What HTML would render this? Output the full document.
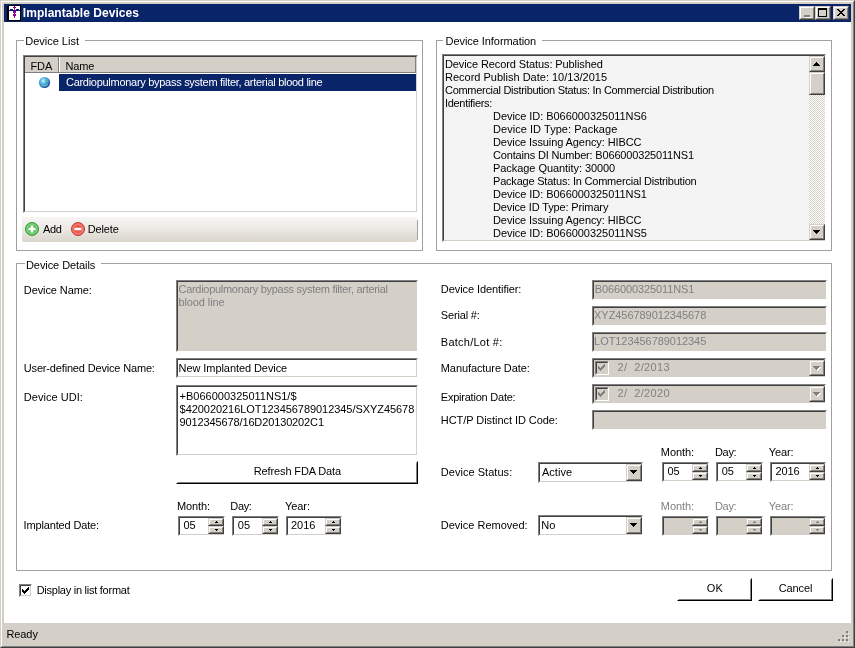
<!DOCTYPE html>
<html><head><meta charset="utf-8"><style>
*{box-sizing:border-box;margin:0;padding:0}
html,body{width:855px;height:648px;overflow:hidden;background:#d4d0c8;font-family:"Liberation Sans",sans-serif;font-size:11px;color:#000}
.a{position:absolute}
.tx{position:absolute;white-space:pre;line-height:13px}
.wt{color:#fff}
.bd{font-weight:bold;font-size:12px}
.dis{color:#808080}
.sk{position:absolute;border:1px solid;border-color:#808080 #fff #fff #808080}
.sk>.in{position:absolute;left:0;top:0;right:0;bottom:0;border:1px solid;border-color:#404040 #d4d0c8 #d4d0c8 #404040}
.rb{position:absolute;background:#d4d0c8;border:1px solid;border-color:#d4d0c8 #404040 #404040 #d4d0c8}
.rb>.in{position:absolute;left:0;top:0;right:0;bottom:0;border:1px solid;border-color:#fff #808080 #808080 #fff}
.gb{position:absolute;border:1px solid #a0a0a0}
</style></head><body>
<div class="a" style="left:0;top:0;width:855px;height:648px;border:1px solid;border-color:#d4d0c8 #404040 #404040 #d4d0c8"></div>
<div class="a" style="left:1px;top:1px;width:853px;height:646px;border:1px solid;border-color:#fff #808080 #808080 #fff"></div>
<div class="a" style="left:4px;top:4px;width:847px;height:18px;background:#0a246a"></div>
<svg class="a" style="left:7px;top:5px" width="14" height="16" viewBox="-1 0 14 16" shape-rendering="crispEdges">
<rect x="-1" y="1" width="14" height="15" fill="#000"/><rect x="0" y="0" width="13" height="16" fill="#000"/><rect x="1" y="1" width="11" height="14" fill="#fff"/>
<rect x="1" y="5" width="11" height="1" fill="#0a1a8a"/><rect x="2" y="4" width="3" height="1" fill="#0a1a8a"/><rect x="8" y="4" width="3" height="1" fill="#0a1a8a"/>
<rect x="6" y="1" width="1" height="12" fill="#900090"/><rect x="5" y="2" width="3" height="1" fill="#900090"/>
<rect x="5" y="6" width="3" height="2" fill="#900090"/><rect x="5" y="9" width="3" height="2" fill="#900090"/>
</svg>
<div class="rb" style="left:799px;top:6px;width:16px;height:14px"><div class="in"></div><div class="a" style="left:4px;top:8px;width:6px;height:2px;background:#808080"></div><div class="a" style="left:5px;top:10px;width:6px;height:1px;background:#fff"></div></div>
<div class="rb" style="left:815px;top:6px;width:16px;height:14px"><div class="in"></div><div class="a" style="left:2px;top:1px;width:9px;height:9px;border:1px solid #000;border-top-width:2px"></div></div>
<div class="rb" style="left:833px;top:6px;width:16px;height:14px"><div class="in"></div><svg class="a" style="left:3px;top:2px" width="8" height="7" shape-rendering="crispEdges" fill="#000"><rect x="0" y="0" width="1" height="1"/><rect x="1" y="0" width="1" height="1"/><rect x="6" y="0" width="1" height="1"/><rect x="7" y="0" width="1" height="1"/><rect x="1" y="1" width="1" height="1"/><rect x="2" y="1" width="1" height="1"/><rect x="5" y="1" width="1" height="1"/><rect x="6" y="1" width="1" height="1"/><rect x="2" y="2" width="1" height="1"/><rect x="3" y="2" width="1" height="1"/><rect x="4" y="2" width="1" height="1"/><rect x="5" y="2" width="1" height="1"/><rect x="3" y="3" width="1" height="1"/><rect x="4" y="3" width="1" height="1"/><rect x="2" y="4" width="1" height="1"/><rect x="3" y="4" width="1" height="1"/><rect x="4" y="4" width="1" height="1"/><rect x="5" y="4" width="1" height="1"/><rect x="1" y="5" width="1" height="1"/><rect x="2" y="5" width="1" height="1"/><rect x="5" y="5" width="1" height="1"/><rect x="6" y="5" width="1" height="1"/><rect x="0" y="6" width="1" height="1"/><rect x="1" y="6" width="1" height="1"/><rect x="6" y="6" width="1" height="1"/><rect x="7" y="6" width="1" height="1"/></svg></div>
<div class="a" style="left:4px;top:22px;width:847px;height:601px;background:#fff"></div>
<div class="gb" style="left:16px;top:40px;width:407px;height:211px"></div>
<div class="a" style="left:24px;top:38px;width:61px;height:5px;background:#fff"></div>
<div class="gb" style="left:436px;top:40px;width:396px;height:211px"></div>
<div class="a" style="left:443px;top:38px;width:99px;height:5px;background:#fff"></div>
<div class="gb" style="left:16px;top:263px;width:816px;height:308px"></div>
<div class="a" style="left:25px;top:261px;width:76px;height:5px;background:#fff"></div>
<div class="sk" style="left:23px;top:55px;width:395px;height:158px;background:#fff"><div class="in"></div></div>
<div class="a" style="left:25px;top:57px;width:391px;height:16px;background:#d4d0c8"></div>
<div class="a" style="left:25px;top:72px;width:391px;height:1px;background:#808080"></div>
<div class="a" style="left:58px;top:57px;width:1px;height:16px;background:#808080"></div>
<div class="a" style="left:59px;top:57px;width:1px;height:15px;background:#fff"></div>
<div class="a" style="left:415px;top:57px;width:1px;height:16px;background:#808080"></div>
<div class="a" style="left:59px;top:74px;width:357px;height:17px;background:#0a246a"></div>
<svg class="a" style="left:38px;top:76px" width="13" height="13" viewBox="0 0 13 13"><defs><radialGradient id="gl" cx="0.4" cy="0.35" r="0.65"><stop offset="0" stop-color="#e0f8ff"/><stop offset="0.35" stop-color="#62c0e8"/><stop offset="0.75" stop-color="#2f7fcf"/><stop offset="1" stop-color="#1c3f9a"/></radialGradient></defs>
<circle cx="6.5" cy="6.5" r="5.6" fill="url(#gl)"/><path d="M3 9 Q6.5 11 10 8.5" stroke="#5fd0a0" stroke-width="1.2" fill="none" opacity="0.8"/><path d="M6 5 Q8 4 10 5.5" stroke="#50c890" stroke-width="1" fill="none" opacity="0.7"/></svg>
<div class="a" style="left:22px;top:217px;width:395px;height:25px;border-radius:2px 0 2px 2px;background:linear-gradient(#f7f6f3,#ebe8e3 50%,#d9d5cc)"></div>
<div class="a" style="left:417px;top:220px;width:1px;height:20px;background:#a8a49c"></div>
<svg class="a" style="left:24px;top:221px" width="16" height="16" viewBox="0 0 16 16">
<circle cx="8" cy="8" r="6.5" fill="#5cc15c" stroke="#3a9a3a" stroke-width="1"/>
<circle cx="8" cy="8" r="5" fill="none" stroke="#8fdc8f" stroke-width="0.8"/>
<path d="M8 4.5 V11.5 M4.5 8 H11.5" stroke="#fff" stroke-width="2.4"/></svg>
<svg class="a" style="left:70px;top:221px" width="16" height="16" viewBox="0 0 16 16">
<circle cx="8" cy="8" r="6.5" fill="#e85a50" stroke="#c83a32" stroke-width="1"/>
<circle cx="8" cy="8" r="5" fill="none" stroke="#f59a90" stroke-width="0.8"/>
<path d="M4.5 8 H11.5" stroke="#fff" stroke-width="2.4"/></svg>
<div class="sk" style="left:442px;top:54px;width:384px;height:188px;background:#f4f4f4"><div class="in"></div></div>
<div class="a" style="left:809px;top:56px;width:16px;height:184px;background:repeating-conic-gradient(#d4d0c8 0 25%,#fff 0 50%) 0 0/2px 2px"></div>
<div class="rb" style="left:809px;top:56px;width:16px;height:16px"><div class="in"></div><svg class="a" style="left:3px;top:5px" width="7" height="4" shape-rendering="crispEdges"><path d="M3 0h1v1h1v1h1v1h1v1h-7v-1h1v-1h1v-1h1z" fill="#000"/></svg></div>
<div class="rb" style="left:809px;top:72px;width:16px;height:23px"><div class="in"></div></div>
<div class="rb" style="left:809px;top:224px;width:16px;height:16px"><div class="in"></div><svg class="a" style="left:3px;top:5px" width="7" height="4" shape-rendering="crispEdges"><path d="M0 0h7v1h-1v1h-1v1h-1v1h-1v-1h-1v-1h-1v-1h-1z" fill="#000"/></svg></div>
<div class="sk" style="left:176px;top:280px;width:242px;height:72px;background:#d4d0c8"><div class="in"></div></div>
<div class="sk" style="left:176px;top:358px;width:242px;height:20px;background:#fff"><div class="in"></div></div>
<div class="sk" style="left:176px;top:385px;width:242px;height:71px;background:#fff"><div class="in"></div></div>
<div class="a" style="left:176px;top:461px;width:242px;height:23px;background:#fff;border:1px solid;border-color:#fff #000 #000 #fff"><div class="a" style="left:0;top:0;right:0;bottom:0;border:1px solid;border-color:#fff #808080 #808080 #fff"></div></div>
<div class="sk" style="left:178px;top:516px;width:47px;height:20px;background:#fff"><div class="in"></div></div>
<div class="rb" style="left:208px;top:518px;width:16px;height:8px"><div class="in"></div><div class="a" style="left:7px;top:2px;width:1px;height:1px;background:#000"></div><div class="a" style="left:6px;top:3px;width:3px;height:1px;background:#000"></div></div>
<div class="rb" style="left:208px;top:526px;width:16px;height:8px"><div class="in"></div><div class="a" style="left:6px;top:2px;width:3px;height:1px;background:#000"></div><div class="a" style="left:7px;top:3px;width:1px;height:1px;background:#000"></div></div>
<div class="sk" style="left:232px;top:516px;width:47px;height:20px;background:#fff"><div class="in"></div></div>
<div class="rb" style="left:262px;top:518px;width:16px;height:8px"><div class="in"></div><div class="a" style="left:7px;top:2px;width:1px;height:1px;background:#000"></div><div class="a" style="left:6px;top:3px;width:3px;height:1px;background:#000"></div></div>
<div class="rb" style="left:262px;top:526px;width:16px;height:8px"><div class="in"></div><div class="a" style="left:6px;top:2px;width:3px;height:1px;background:#000"></div><div class="a" style="left:7px;top:3px;width:1px;height:1px;background:#000"></div></div>
<div class="sk" style="left:286px;top:516px;width:56px;height:20px;background:#fff"><div class="in"></div></div>
<div class="rb" style="left:325px;top:518px;width:16px;height:8px"><div class="in"></div><div class="a" style="left:7px;top:2px;width:1px;height:1px;background:#000"></div><div class="a" style="left:6px;top:3px;width:3px;height:1px;background:#000"></div></div>
<div class="rb" style="left:325px;top:526px;width:16px;height:8px"><div class="in"></div><div class="a" style="left:6px;top:2px;width:3px;height:1px;background:#000"></div><div class="a" style="left:7px;top:3px;width:1px;height:1px;background:#000"></div></div>
<div class="sk" style="left:592px;top:280px;width:235px;height:20px;background:#d4d0c8"><div class="in"></div></div>
<div class="sk" style="left:592px;top:306px;width:235px;height:20px;background:#d4d0c8"><div class="in"></div></div>
<div class="sk" style="left:592px;top:332px;width:235px;height:20px;background:#d4d0c8"><div class="in"></div></div>
<div class="sk" style="left:592px;top:358px;width:234px;height:20px;background:#d4d0c8"><div class="in"></div></div>
<div class="sk" style="left:595px;top:361px;width:14px;height:14px;background:#d4d0c8"><div class="in"></div></div>
<svg class="a" style="left:598px;top:364px" width="7" height="7" shape-rendering="crispEdges"><path d="M6 0h1v3h-1v1h-1v1h-1v1h-1v1h-1v-1h-1v-1h-1v-3h1v1h1v1h1v-1h1v-1h1z" fill="#808080"/></svg>
<div class="rb" style="left:809px;top:360px;width:16px;height:16px"><div class="in"></div><svg class="a" style="left:3px;top:5px" width="8" height="5" shape-rendering="crispEdges"><path d="M1 1h7v1h-1v1h-1v1h-1v1h-1v-1h-1v-1h-1v-1h-1z" fill="#fff"/><path d="M0 0h7v1h-1v1h-1v1h-1v1h-1v-1h-1v-1h-1v-1h-1z" fill="#808080"/></svg></div>
<div class="sk" style="left:592px;top:384px;width:234px;height:20px;background:#d4d0c8"><div class="in"></div></div>
<div class="sk" style="left:595px;top:387px;width:14px;height:14px;background:#d4d0c8"><div class="in"></div></div>
<svg class="a" style="left:598px;top:390px" width="7" height="7" shape-rendering="crispEdges"><path d="M6 0h1v3h-1v1h-1v1h-1v1h-1v1h-1v-1h-1v-1h-1v-3h1v1h1v1h1v-1h1v-1h1z" fill="#808080"/></svg>
<div class="rb" style="left:809px;top:386px;width:16px;height:16px"><div class="in"></div><svg class="a" style="left:3px;top:5px" width="8" height="5" shape-rendering="crispEdges"><path d="M1 1h7v1h-1v1h-1v1h-1v1h-1v-1h-1v-1h-1v-1h-1z" fill="#fff"/><path d="M0 0h7v1h-1v1h-1v1h-1v1h-1v-1h-1v-1h-1v-1h-1z" fill="#808080"/></svg></div>
<div class="sk" style="left:592px;top:410px;width:235px;height:20px;background:#d4d0c8"><div class="in"></div></div>
<div class="sk" style="left:538px;top:462px;width:105px;height:21px;background:#fff"><div class="in"></div></div>
<div class="rb" style="left:626px;top:464px;width:16px;height:17px"><div class="in"></div><svg class="a" style="left:3px;top:5px" width="7" height="4" shape-rendering="crispEdges"><path d="M0 0h7v1h-1v1h-1v1h-1v1h-1v-1h-1v-1h-1v-1h-1z" fill="#000"/></svg></div>
<div class="sk" style="left:538px;top:515px;width:105px;height:21px;background:#fff"><div class="in"></div></div>
<div class="rb" style="left:626px;top:517px;width:16px;height:17px"><div class="in"></div><svg class="a" style="left:3px;top:5px" width="7" height="4" shape-rendering="crispEdges"><path d="M0 0h7v1h-1v1h-1v1h-1v1h-1v-1h-1v-1h-1v-1h-1z" fill="#000"/></svg></div>
<div class="sk" style="left:662px;top:462px;width:47px;height:20px;background:#fff"><div class="in"></div></div>
<div class="rb" style="left:692px;top:464px;width:16px;height:8px"><div class="in"></div><div class="a" style="left:7px;top:2px;width:1px;height:1px;background:#000"></div><div class="a" style="left:6px;top:3px;width:3px;height:1px;background:#000"></div></div>
<div class="rb" style="left:692px;top:472px;width:16px;height:8px"><div class="in"></div><div class="a" style="left:6px;top:2px;width:3px;height:1px;background:#000"></div><div class="a" style="left:7px;top:3px;width:1px;height:1px;background:#000"></div></div>
<div class="sk" style="left:716px;top:462px;width:47px;height:20px;background:#fff"><div class="in"></div></div>
<div class="rb" style="left:746px;top:464px;width:16px;height:8px"><div class="in"></div><div class="a" style="left:7px;top:2px;width:1px;height:1px;background:#000"></div><div class="a" style="left:6px;top:3px;width:3px;height:1px;background:#000"></div></div>
<div class="rb" style="left:746px;top:472px;width:16px;height:8px"><div class="in"></div><div class="a" style="left:6px;top:2px;width:3px;height:1px;background:#000"></div><div class="a" style="left:7px;top:3px;width:1px;height:1px;background:#000"></div></div>
<div class="sk" style="left:770px;top:462px;width:56px;height:20px;background:#fff"><div class="in"></div></div>
<div class="rb" style="left:809px;top:464px;width:16px;height:8px"><div class="in"></div><div class="a" style="left:7px;top:2px;width:1px;height:1px;background:#000"></div><div class="a" style="left:6px;top:3px;width:3px;height:1px;background:#000"></div></div>
<div class="rb" style="left:809px;top:472px;width:16px;height:8px"><div class="in"></div><div class="a" style="left:6px;top:2px;width:3px;height:1px;background:#000"></div><div class="a" style="left:7px;top:3px;width:1px;height:1px;background:#000"></div></div>
<div class="sk" style="left:662px;top:516px;width:47px;height:20px;background:#d4d0c8"><div class="in"></div></div>
<div class="rb" style="left:692px;top:518px;width:16px;height:8px"><div class="in"></div><div class="a" style="left:7px;top:2px;width:1px;height:1px;background:#808080"></div><div class="a" style="left:6px;top:3px;width:3px;height:1px;background:#808080"></div></div>
<div class="rb" style="left:692px;top:526px;width:16px;height:8px"><div class="in"></div><div class="a" style="left:6px;top:2px;width:3px;height:1px;background:#808080"></div><div class="a" style="left:7px;top:3px;width:1px;height:1px;background:#808080"></div></div>
<div class="sk" style="left:716px;top:516px;width:47px;height:20px;background:#d4d0c8"><div class="in"></div></div>
<div class="rb" style="left:746px;top:518px;width:16px;height:8px"><div class="in"></div><div class="a" style="left:7px;top:2px;width:1px;height:1px;background:#808080"></div><div class="a" style="left:6px;top:3px;width:3px;height:1px;background:#808080"></div></div>
<div class="rb" style="left:746px;top:526px;width:16px;height:8px"><div class="in"></div><div class="a" style="left:6px;top:2px;width:3px;height:1px;background:#808080"></div><div class="a" style="left:7px;top:3px;width:1px;height:1px;background:#808080"></div></div>
<div class="sk" style="left:770px;top:516px;width:56px;height:20px;background:#d4d0c8"><div class="in"></div></div>
<div class="rb" style="left:809px;top:518px;width:16px;height:8px"><div class="in"></div><div class="a" style="left:7px;top:2px;width:1px;height:1px;background:#808080"></div><div class="a" style="left:6px;top:3px;width:3px;height:1px;background:#808080"></div></div>
<div class="rb" style="left:809px;top:526px;width:16px;height:8px"><div class="in"></div><div class="a" style="left:6px;top:2px;width:3px;height:1px;background:#808080"></div><div class="a" style="left:7px;top:3px;width:1px;height:1px;background:#808080"></div></div>
<div class="sk" style="left:19px;top:584px;width:13px;height:13px;background:#fff"><div class="in"></div></div>
<svg class="a" style="left:22px;top:587px" width="7" height="7" shape-rendering="crispEdges"><path d="M6 0h1v3h-1v1h-1v1h-1v1h-1v1h-1v-1h-1v-1h-1v-3h1v1h1v1h1v-1h1v-1h1z" fill="#000"/></svg>
<div class="a" style="left:677px;top:578px;width:75px;height:23px;background:#fff;border:1px solid;border-color:#fff #000 #000 #fff"><div class="a" style="left:0;top:0;right:0;bottom:0;border:1px solid;border-color:#fff #808080 #808080 #fff"></div></div>
<div class="a" style="left:758px;top:578px;width:75px;height:23px;background:#fff;border:1px solid;border-color:#fff #000 #000 #fff"><div class="a" style="left:0;top:0;right:0;bottom:0;border:1px solid;border-color:#fff #808080 #808080 #fff"></div></div>
<svg class="a" style="left:838px;top:631px" width="12" height="12" viewBox="0 0 12 12">
<g fill="#808080"><rect x="8" y="0" width="2" height="2"/><rect x="4" y="4" width="2" height="2"/><rect x="8" y="4" width="2" height="2"/><rect x="0" y="8" width="2" height="2"/><rect x="4" y="8" width="2" height="2"/><rect x="8" y="8" width="2" height="2"/></g>
<g fill="#fff"><rect x="10" y="2" width="1" height="1"/><rect x="6" y="6" width="1" height="1"/><rect x="10" y="6" width="1" height="1"/><rect x="2" y="10" width="1" height="1"/><rect x="6" y="10" width="1" height="1"/><rect x="10" y="10" width="1" height="1"/></g></svg>
<div style="position:absolute;left:0;top:0;width:855px;height:648px;will-change:transform">
<div class="tx wt bd" style="left:22.80px;top:7px;letter-spacing:0.044px">Implantable Devices</div>
<div class="tx" style="left:6.40px;top:628px;letter-spacing:-0.075px">Ready</div>
<div class="tx" style="left:25.20px;top:35px">Device List</div>
<div class="tx" style="left:30.40px;top:60px">FDA</div>
<div class="tx" style="left:65.50px;top:60px;letter-spacing:-0.167px">Name</div>
<div class="tx wt" style="left:66.00px;top:76px;letter-spacing:-0.286px">Cardiopulmonary bypass system filter, arterial blood line</div>
<div class="tx" style="left:43.00px;top:223px;letter-spacing:-0.300px">Add</div>
<div class="tx" style="left:87.70px;top:223px;letter-spacing:-0.140px">Delete</div>
<div class="tx" style="left:445.50px;top:35px;letter-spacing:-0.059px">Device Information</div>
<div class="tx" style="left:445.00px;top:58px;letter-spacing:-0.100px">Device Record Status: Published</div>
<div class="tx" style="left:445.00px;top:71px">Record Publish Date: 10/13/2015</div>
<div class="tx" style="left:445.00px;top:84px;letter-spacing:-0.298px">Commercial Distribution Status: In Commercial Distribution</div>
<div class="tx" style="left:445.00px;top:97px;letter-spacing:-0.309px">Identifiers:</div>
<div class="tx" style="left:493.00px;top:110px;letter-spacing:-0.050px">Device ID: B066000325011NS6</div>
<div class="tx" style="left:493.00px;top:123px;letter-spacing:0.045px">Device ID Type: Package</div>
<div class="tx" style="left:493.00px;top:136px;letter-spacing:-0.093px">Device Issuing Agency: HIBCC</div>
<div class="tx" style="left:493.00px;top:149px;letter-spacing:-0.171px">Contains DI Number: B066000325011NS1</div>
<div class="tx" style="left:493.00px;top:162px;letter-spacing:-0.059px">Package Quantity: 30000</div>
<div class="tx" style="left:493.00px;top:175px;letter-spacing:-0.205px">Package Status: In Commercial Distribution</div>
<div class="tx" style="left:493.00px;top:188px;letter-spacing:-0.050px">Device ID: B066000325011NS1</div>
<div class="tx" style="left:493.00px;top:201px;letter-spacing:-0.136px">Device ID Type: Primary</div>
<div class="tx" style="left:493.00px;top:214px;letter-spacing:-0.093px">Device Issuing Agency: HIBCC</div>
<div class="tx" style="left:493.00px;top:227px;letter-spacing:-0.050px">Device ID: B066000325011NS5</div>
<div class="tx" style="left:26.00px;top:259px;letter-spacing:-0.077px">Device Details</div>
<div class="tx" style="left:23.80px;top:284px;letter-spacing:-0.091px">Device Name:</div>
<div class="tx" style="left:23.80px;top:362px;letter-spacing:-0.167px">User-defined Device Name:</div>
<div class="tx" style="left:23.80px;top:391px;letter-spacing:0.040px">Device UDI:</div>
<div class="tx" style="left:23.60px;top:519px;letter-spacing:-0.157px">Implanted Date:</div>
<div class="tx dis" style="left:178.50px;top:283px;letter-spacing:-0.289px">Cardiopulmonary bypass system filter, arterial</div>
<div class="tx dis" style="left:178.50px;top:296px;letter-spacing:-0.111px">blood line</div>
<div class="tx" style="left:178.60px;top:362px;letter-spacing:-0.074px">New Implanted Device</div>
<div class="tx" style="left:179.60px;top:390px">+B066000325011NS1/$</div>
<div class="tx" style="left:179.60px;top:403px;letter-spacing:-0.054px">$420020216LOT123456789012345/SXYZ45678</div>
<div class="tx" style="left:179.60px;top:416px;letter-spacing:-0.130px">9012345678/16D20130202C1</div>
<div class="tx" style="left:253.80px;top:465px;letter-spacing:-0.133px">Refresh FDA Data</div>
<div class="tx" style="left:177.00px;top:500px;letter-spacing:-0.100px">Month:</div>
<div class="tx" style="left:230.30px;top:500px;letter-spacing:-0.333px">Day:</div>
<div class="tx" style="left:285.00px;top:500px;letter-spacing:-0.075px">Year:</div>
<div class="tx" style="left:183.40px;top:519px">05</div>
<div class="tx" style="left:237.80px;top:519px">05</div>
<div class="tx" style="left:291.00px;top:519px;letter-spacing:-0.033px">2016</div>
<div class="tx" style="left:440.80px;top:283px;letter-spacing:-0.076px">Device Identifier:</div>
<div class="tx" style="left:440.80px;top:309px;letter-spacing:-0.162px">Serial #:</div>
<div class="tx" style="left:440.80px;top:336px;letter-spacing:0.245px">Batch/Lot #:</div>
<div class="tx" style="left:440.80px;top:362px;letter-spacing:-0.094px">Manufacture Date:</div>
<div class="tx" style="left:440.80px;top:391px;letter-spacing:-0.227px">Expiration Date:</div>
<div class="tx" style="left:440.80px;top:414px;letter-spacing:-0.059px">HCT/P Distinct ID Code:</div>
<div class="tx" style="left:440.80px;top:466px;letter-spacing:0.038px">Device Status:</div>
<div class="tx" style="left:440.80px;top:519px">Device Removed:</div>
<div class="tx dis" style="left:594.80px;top:283px;letter-spacing:-0.113px">B066000325011NS1</div>
<div class="tx dis" style="left:594.10px;top:309px;letter-spacing:-0.059px">XYZ456789012345678</div>
<div class="tx dis" style="left:594.10px;top:335px;letter-spacing:-0.059px">LOT123456789012345</div>
<div class="tx dis" style="left:617.60px;top:361px;letter-spacing:0.333px">2/  2/2013</div>
<div class="tx dis" style="left:617.60px;top:387px;letter-spacing:0.333px">2/  2/2020</div>
<div class="tx" style="left:541.90px;top:466px;letter-spacing:0.060px">Active</div>
<div class="tx" style="left:541.30px;top:519px">No</div>
<div class="tx" style="left:660.80px;top:446px;letter-spacing:-0.080px">Month:</div>
<div class="tx" style="left:715.00px;top:446px;letter-spacing:-0.333px">Day:</div>
<div class="tx" style="left:768.70px;top:446px;letter-spacing:-0.075px">Year:</div>
<div class="tx dis" style="left:660.80px;top:500px;letter-spacing:-0.080px">Month:</div>
<div class="tx dis" style="left:715.00px;top:500px;letter-spacing:-0.333px">Day:</div>
<div class="tx dis" style="left:768.70px;top:500px;letter-spacing:-0.075px">Year:</div>
<div class="tx" style="left:667.50px;top:465px">05</div>
<div class="tx" style="left:721.70px;top:465px">05</div>
<div class="tx" style="left:775.50px;top:465px;letter-spacing:-0.100px">2016</div>
<div class="tx" style="left:36.70px;top:584px;letter-spacing:-0.257px">Display in list format</div>
<div class="tx" style="left:706.85px;top:582px">OK</div>
<div class="tx" style="left:778.80px;top:582px;letter-spacing:-0.120px">Cancel</div>
</div></body></html>
